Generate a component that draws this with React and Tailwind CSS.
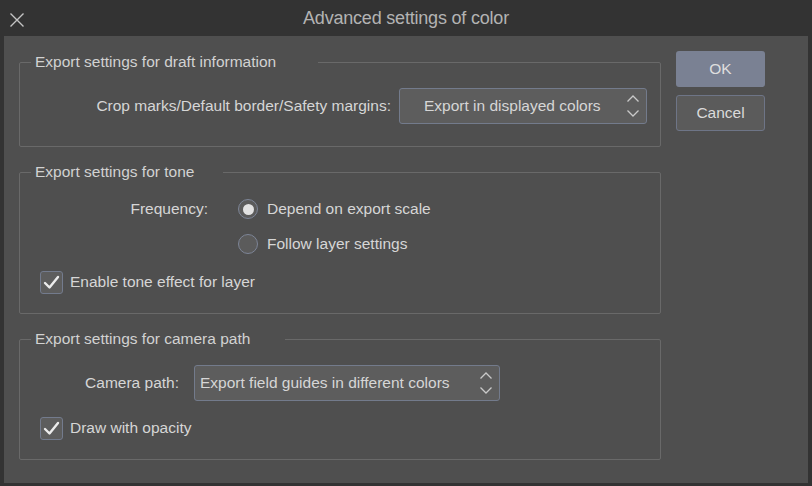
import React from "react";

const font = { fontFamily: '"Liberation Sans", Arial, sans-serif' };

function Chevrons() {
  return (
    <svg width="14" height="26" viewBox="0 0 14 26" fill="none" stroke="#c9c9c9" strokeWidth="1.3">
      <path d="M1.5 8.5 L7 3 L12.5 8.5" />
      <path d="M1.5 17.5 L7 23 L12.5 17.5" />
    </svg>
  );
}

function Radio({ on }) {
  return (
    <span className="flex h-[20px] w-[20px] items-center justify-center rounded-full border border-[#7d8597] bg-[#5b5b5b]">
      {on && <span className="h-[11px] w-[11px] rounded-full bg-[#e2e2e2]" />}
    </span>
  );
}

function Check() {
  return (
    <span className="flex h-[23px] w-[23px] items-center justify-center rounded-[3px] border border-[#737b8d] bg-[#5d5d5d]">
      <svg width="17" height="15" viewBox="0 0 17 15" fill="none" stroke="#ececec" strokeWidth="2.4" strokeLinecap="round" strokeLinejoin="round">
        <path d="M2 8 L6.5 12.5 L15 2" />
      </svg>
    </span>
  );
}

function Group({ title, legendW, children, className }) {
  return (
    <fieldset className={"w-[642px] rounded-[2px] border border-[#696969] px-[11px] " + className}>
      <legend className="h-[20px] pl-[4px] leading-[20px] text-[#d2d2d2]" style={{ width: legendW }}>
        {title}
      </legend>
      {children}
    </fieldset>
  );
}

export default function App() {
  return (
    <div className="h-[486px] w-[812px] bg-[#333333] text-[15.5px] text-[#d6d6d6]" style={font}>
      <div className="relative flex h-[36px] items-center justify-center">
        <svg className="absolute left-[9px] top-[12px]" width="16" height="16" viewBox="0 0 16 16" stroke="#c4c4c4" strokeWidth="1.4">
          <path d="M1.5 1.5 L14.5 14.5 M14.5 1.5 L1.5 14.5" />
        </svg>
        <span className="text-[18px] tracking-[-0.2px] text-[#b3b3b3]">Advanced settings of color</span>
      </div>

      <div className="ml-[4px] flex h-[447px] w-[804px] bg-[#4f4f4f] pl-[15px]">
        <div className="pt-[16px]">
          <Group title="Export settings for draft information" legendW={287} className="pb-[22px]">
            <div className="flex items-center pt-[16px]">
              <span className="w-[360px] text-right">Crop marks/Default border/Safety margins:</span>
              <div className="ml-[8px] flex h-[36px] w-[248px] items-center justify-between rounded-[3px] border border-[#737b8c] bg-[#5d5d5d] pl-[24px] pr-[6px]">
                <span>Export in displayed colors</span>
                <Chevrons />
              </div>
            </div>
          </Group>

          <Group title="Export settings for tone" legendW={192} className="mt-[15px] pb-[18px]">
            <div className="pt-[14px]">
              <div className="flex h-[26px] items-center">
                <span className="w-[177px] text-right">Frequency:</span>
                <span className="ml-[30px]"><Radio on /></span>
                <span className="ml-[9px]">Depend on export scale</span>
              </div>
              <div className="mt-[9px] flex h-[26px] items-center pl-[207px]">
                <Radio />
                <span className="ml-[9px]">Follow layer settings</span>
              </div>
              <div className="mt-[12px] flex h-[26px] items-center pl-[9px]">
                <Check />
                <span className="ml-[7px]">Enable tone effect for layer</span>
              </div>
            </div>
          </Group>

          <Group title="Export settings for camera path" legendW={254} className="mt-[15px] pb-[18px]">
            <div className="pt-[16px]">
              <div className="flex items-center">
                <span className="w-[148px] text-right">Camera path:</span>
                <div className="ml-[15px] flex h-[36px] w-[306px] items-center justify-between rounded-[3px] border border-[#737b8c] bg-[#5d5d5d] pl-[5px] pr-[6px]">
                  <span>Export field guides in different colors</span>
                  <Chevrons />
                </div>
              </div>
              <div className="mt-[14px] flex h-[26px] items-center pl-[9px]">
                <Check />
                <span className="ml-[7px]">Draw with opacity</span>
              </div>
            </div>
          </Group>
        </div>

        <div className="ml-[15px] flex flex-col gap-[8px] pt-[15px]">
          <button className="h-[36px] w-[89px] rounded-[3px] bg-[#7a8193] text-[#dedede]">OK</button>
          <button className="h-[36px] w-[89px] rounded-[3px] border border-[#6e7587] bg-[#5b5b5b] text-[#dadada]">Cancel</button>
        </div>
      </div>
    </div>
  );
}
